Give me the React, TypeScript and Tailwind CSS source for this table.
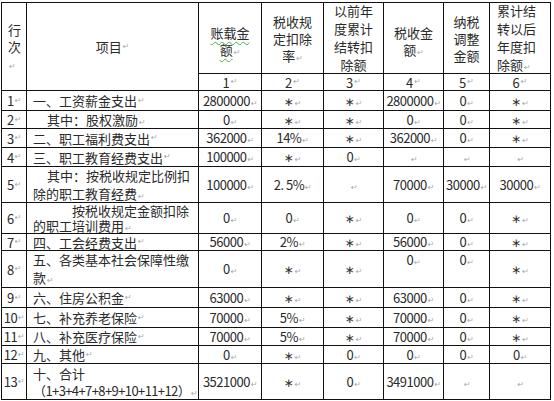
import React from "react";

// Word paragraph mark
function R({ className = "" }: { className?: string }) {
  return (
    <span className={"ml-px text-[8px] leading-none text-[#a9a9a9] font-['DejaVu_Sans',sans-serif] " + className}>
      ↵
    </span>
  );
}

const wavy = "underline decoration-wavy decoration-[#46b04a] decoration-1 underline-offset-[3px]";

type Row = {
  n: string;
  item: React.ReactNode;
  v: string[];
  top?: number[];
};

const rows: Row[] = [
  { n: "1", item: <>一、工资薪金支出<R className="ml-[11px]" /></>, v: ["2800000", "*", "*", "2800000", "0", "*"] },
  { n: "2", item: <span className="pl-[14px]">其中：股权激励<R /></span>, v: ["0", "*", "*", "0", "0", "*"] },
  { n: "3", item: <>二、职工福利费支出<R /></>, v: ["362000", "14%", "*", "362000", "0", "*"] },
  { n: "4", item: <>三、职工教育经费支出<R /></>, v: ["100000", "*", "0", "", "", ""] },
  {
    n: "5",
    item: (
      <div className="leading-[18px]">
        <div className="pl-[14px]">其中：按税收规定比例扣</div>
        <div>除的职工教育经费<R /></div>
      </div>
    ),
    v: ["100000", "2. 5%", "", "70000", "30000", "30000"],
  },
  {
    n: "6",
    item: (
      <div className="leading-[15px]">
        <div className="pl-[39px]">按税收规定金额扣除</div>
        <div>的职工培训费用<R /></div>
      </div>
    ),
    v: ["0", "0", "*", "0", "0", "*"],
  },
  { n: "7", item: <>四、工会经费支出<R className="ml-[11px]" /></>, v: ["56000", "2%", "*", "56000", "0", "*"] },
  {
    n: "8",
    item: (
      <div className="leading-[18px]">
        <div>五、各类基本社会保障性缴</div>
        <div>款<R /></div>
      </div>
    ),
    v: ["0", "*", "*", "0", "0", "*"],
    top: [3, 4],
  },
  { n: "9", item: <>六、住房公积金<R /></>, v: ["63000", "*", "*", "63000", "0", "*"] },
  { n: "10", item: <>七、补充养老保险<R /></>, v: ["70000", "5%", "*", "70000", "0", "*"] },
  { n: "11", item: <>八、补充医疗保险<R /></>, v: ["70000", "5%", "*", "70000", "0", "*"] },
  { n: "12", item: <>九、其他<R /></>, v: ["0", "*", "0", "0", "0", "0"] },
  {
    n: "13",
    item: (
      <div className="leading-[17px]">
        <div>十、合计</div>
        <div className="whitespace-nowrap tracking-[-0.6px]">（1+3+4+7+8+9+10+11+12）<R /></div>
      </div>
    ),
    v: ["3521000", "*", "0", "3491000", "", ""],
  },
];

function Val({ s }: { s: string }) {
  if (s === "*") {
    return (
      <span>
        <span className="font-['DejaVu_Sans',sans-serif] text-[12px] text-[#333]">∗</span>
        <R />
      </span>
    );
  }
  return (
    <span className="tracking-[-0.5px]">
      {s}
      <R />
    </span>
  );
}

export default function App() {
  return (
    <div className="w-[554px] h-[401px] bg-white pt-[2px] pl-px font-['Noto_Sans_CJK_SC',sans-serif] text-[13px] text-[#2a2a2a]">
      <div className="grid w-[550px] gap-px bg-[#111] p-px grid-cols-[24px_171px_62px_61px_59px_59px_45px_60px] grid-rows-[70px_16px_19px_17px_18px_18px_35px_30px_16px_36px_19px_19px_17px_17px_35px]">
        {/* header */}
        <div className="row-span-2 bg-white flex items-center pl-[6px] leading-[17px]">
          <div>
            <div>行</div>
            <div>次<R /></div>
          </div>
        </div>
        <div className="row-span-2 bg-white flex items-center justify-center">
          项目<R />
        </div>
        <div className="bg-white flex items-center justify-center text-center leading-[17px] pt-[5px]">
          <div>
            <span className={wavy}>账载金</span>
            <br />
            <span className={wavy}>额</span>
            <R className="ml-[12px]" />
          </div>
        </div>
        <div className="bg-white flex items-center justify-center text-center leading-[17px]">
          <div>
            税收规
            <br />
            定扣除
            <br />
            率<R className="ml-[16px]" />
          </div>
        </div>
        <div className="bg-white flex items-center justify-center text-center leading-[18px]">
          <div>
            以前年
            <br />
            度累计
            <br />
            结转扣
            <br />
            除额
          </div>
        </div>
        <div className="bg-white flex items-center justify-center text-center leading-[17px] pt-[5px]">
          <div>
            税收金
            <br />
            额<R className="ml-[12px]" />
          </div>
        </div>
        <div className="bg-white flex items-center justify-center text-center leading-[17px]">
          <div>
            纳税
            <br />
            调整
            <br />
            金额
          </div>
        </div>
        <div className="bg-white flex items-center pl-[7px] leading-[18px]">
          <div>
            累计结
            <br />
            转以后
            <br />
            年度扣
            <br />
            除额<R />
          </div>
        </div>
        {["1", "2", "3", "4", "5", "6"].map((k) => (
          <div key={k} className="bg-white flex items-center justify-center leading-none">
            {k}
            <R />
          </div>
        ))}

        {/* body */}
        {rows.map((r) => (
          <React.Fragment key={r.n}>
            <div className="bg-white flex items-center justify-center leading-none tracking-[-0.5px]">
              {r.n}
              <R />
            </div>
            <div className="bg-white flex items-center pl-[6px] leading-none whitespace-nowrap">{r.item}</div>
            {r.v.map((s, i) => (
              <div
                key={i}
                className={
                  r.top && r.top.includes(i)
                    ? "bg-white flex items-start justify-center pt-[2px] leading-none"
                    : "bg-white flex items-center justify-center leading-none"
                }
              >
                <Val s={s} />
              </div>
            ))}
          </React.Fragment>
        ))}
      </div>
    </div>
  );
}
